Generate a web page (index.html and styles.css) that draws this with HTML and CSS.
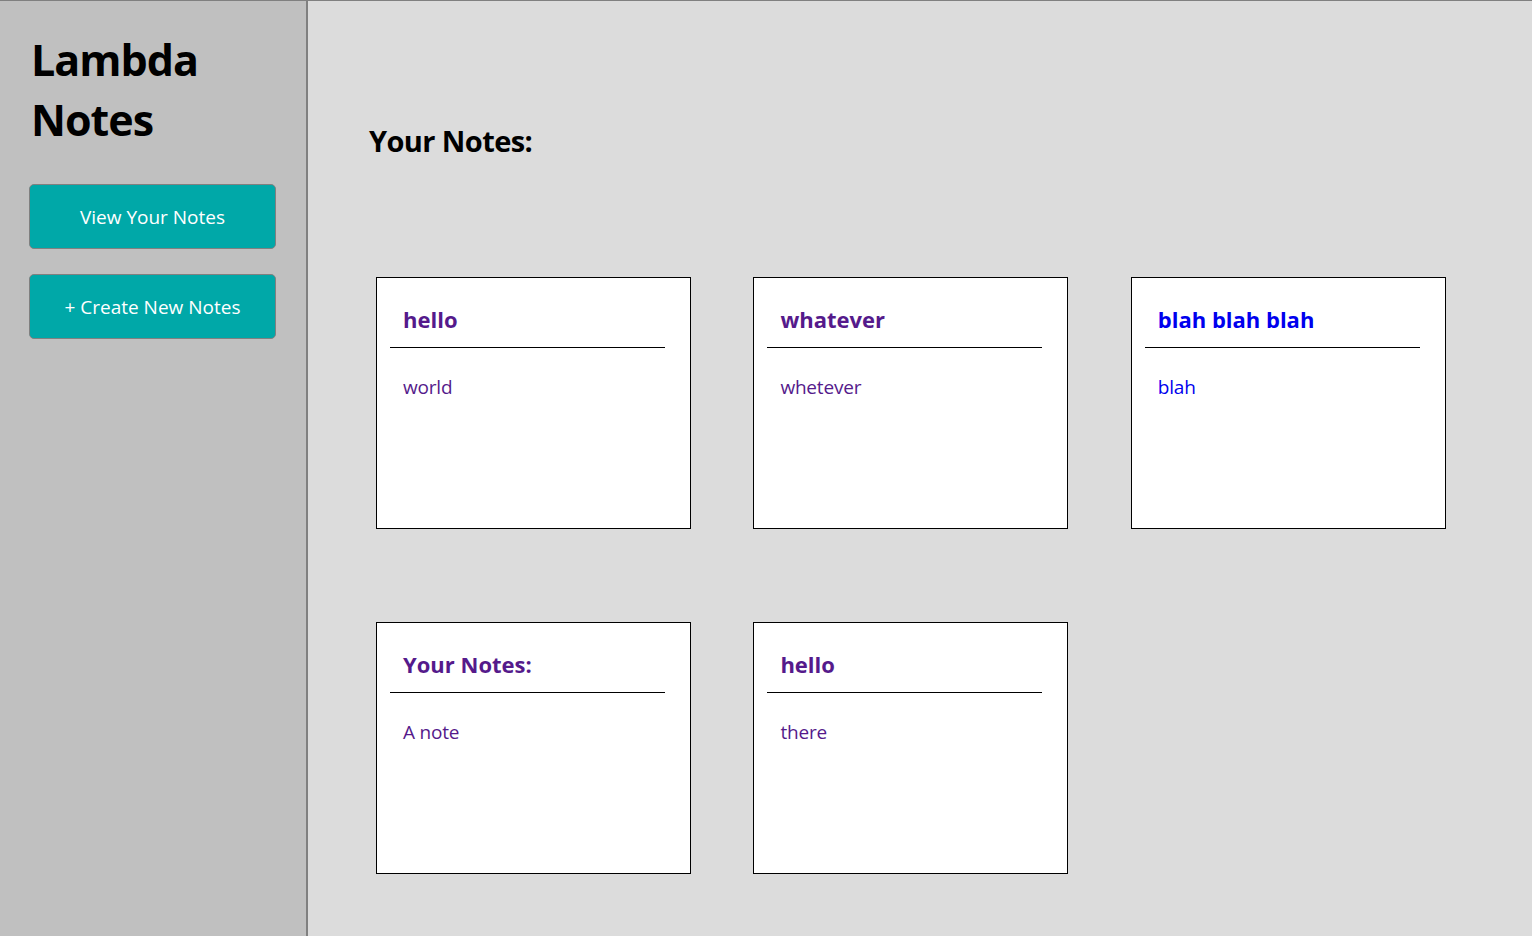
FILE: index.html
```html
<!DOCTYPE html>
<html lang="en">
<head>
<meta charset="utf-8">
<title>Lambda Notes</title>
<link rel="stylesheet" href="styles.css">
</head>
<body>
<div class="app">
  <aside class="sidebar">
    <h1 class="brand">Lambda Notes</h1>
    <a class="nav-btn" href="#notes">View Your Notes</a>
    <a class="nav-btn" href="#create">+ Create New Notes</a>
  </aside>
  <main class="main">
    <h2 class="page-title">Your Notes:</h2>
    <div class="notes">
      <a class="card visited" href="#n1">
        <h3 class="card-title">hello</h3>
        <hr class="card-rule">
        <p class="card-body">world</p>
      </a>
      <a class="card visited" href="#n2">
        <h3 class="card-title">whatever</h3>
        <hr class="card-rule">
        <p class="card-body">whetever</p>
      </a>
      <a class="card fresh" href="#n3">
        <h3 class="card-title">blah blah blah</h3>
        <hr class="card-rule">
        <p class="card-body">blah</p>
      </a>
      <a class="card visited" href="#n4">
        <h3 class="card-title">Your Notes:</h3>
        <hr class="card-rule">
        <p class="card-body">A note</p>
      </a>
      <a class="card visited" href="#n5">
        <h3 class="card-title">hello</h3>
        <hr class="card-rule">
        <p class="card-body">there</p>
      </a>
    </div>
  </main>
</div>
</body>
</html>
```

FILE: styles.css
```css
* { box-sizing: border-box; }

html, body {
  margin: 0;
  padding: 0;
  height: 100%;
}

body {
  font-family: "Open Sans", "Noto Sans", sans-serif;
  background: #dcdcdc;
  color: #000;
}

.app {
  display: flex;
  min-height: 100%;
  border-top: 1px solid #808080;
}

.sidebar {
  width: 308px;
  flex: 0 0 308px;
  background: #c0c0c0;
  border-right: 2px solid #808080;
  padding: 29px 0 0 29px;
  display: flex;
  flex-direction: column;
  align-items: flex-start;
}

.brand {
  margin: 0 0 34px 2px;
  font-size: 43px;
  line-height: 60px;
  font-weight: 700;
  letter-spacing: -1px;
  width: 200px;
}

.nav-btn {
  display: flex;
  align-items: center;
  justify-content: center;
  width: 247px;
  height: 65px;
  margin-bottom: 25px;
  padding-top: 1px;
  background: #00a8a8;
  border: 1px solid #808080;
  border-radius: 5px;
  color: #fff;
  text-decoration: none;
  font-size: 19px;
  letter-spacing: 0;
}

.main {
  flex: 1;
  padding: 120px 0 40px 61px;
}

.page-title {
  margin: 0 0 116px;
  font-size: 29px;
  line-height: 40px;
  font-weight: 700;
  letter-spacing: -0.6px;
}

.notes {
  display: grid;
  grid-template-columns: repeat(3, 315px);
  column-gap: 62.4px;
  row-gap: 93px;
  margin-left: 7px;
}

.card {
  display: block;
  height: 252px;
  background: #fff;
  border: 1px solid #000;
  padding: 25px 25px 0 13px;
  text-decoration: none;
}

.card.visited { color: #551a8b; }
.card.fresh { color: #0000ee; }

.card-title {
  margin: 0 0 0 13px;
  font-size: 22px;
  line-height: 32px;
  font-weight: 700;
  letter-spacing: 0;
}

.card-rule {
  margin: 12px 0 0;
  border: 0;
  border-top: 1px solid #000;
  height: 0;
}

.card-body {
  margin: 27px 0 0 13px;
  font-size: 19px;
  line-height: 24px;
  letter-spacing: -0.2px;
}
```
